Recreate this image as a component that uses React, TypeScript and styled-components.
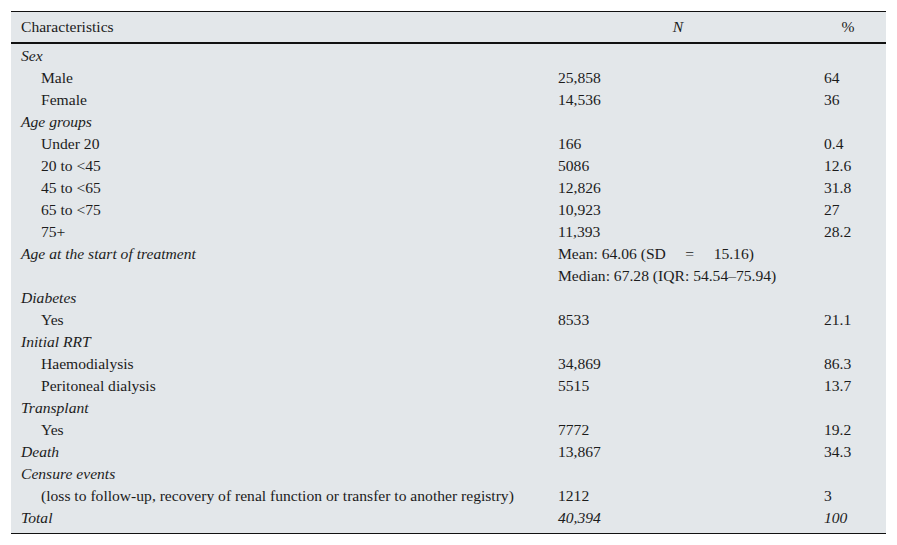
import React from "react"
import styled, { createGlobalStyle } from "styled-components"

const Global = createGlobalStyle`
  body {
    margin: 0;
    background: #ffffff;
    font-family: "Liberation Serif", "Times New Roman", serif;
  }
`

const Wrap = styled.div`
  padding: 11px 11px 0 11px;
`

const Table = styled.table`
  width: 875px;
  border-collapse: collapse;
  background: #e3e7ea;
  color: #1c1c1c;
  font-size: 15.6px;
  border-top: 1px solid #111;
  border-bottom: 1px solid #111;
`

const HeadCell = styled.th<{ $align?: string; $italic?: boolean; $pr?: number }>`
  height: 30px;
  padding: 0 ${p => p.$pr ?? 0}px 0 ${p => (p.$align === "center" ? 0 : 10)}px;
  font-weight: normal;
  text-align: ${p => p.$align || "left"};
  font-style: ${p => (p.$italic ? "italic" : "normal")};
  border-bottom: 2px solid #111;
`

const Cell = styled.td<{ $indent?: boolean; $italic?: boolean }>`
  height: 22px;
  padding: 0 0 0 ${p => (p.$indent ? "30px" : "10px")};
  font-style: ${p => (p.$italic ? "italic" : "normal")};
  white-space: pre;
  line-height: 22px;
`

const FirstRow = styled.tr`
  td {
    padding-top: 1px;
  }
`

const LastRow = styled.tr`
  td {
    padding-bottom: 4px;
  }
`

type Row = { label: string; n?: string; pct?: string; kind: "group" | "item" | "blank" }

const rows: Row[] = [
  { label: "Sex", kind: "group" },
  { label: "Male", n: "25,858", pct: "64", kind: "item" },
  { label: "Female", n: "14,536", pct: "36", kind: "item" },
  { label: "Age groups", kind: "group" },
  { label: "Under 20", n: "166", pct: "0.4", kind: "item" },
  { label: "20 to <45", n: "5086", pct: "12.6", kind: "item" },
  { label: "45 to <65", n: "12,826", pct: "31.8", kind: "item" },
  { label: "65 to <75", n: "10,923", pct: "27", kind: "item" },
  { label: "75+", n: "11,393", pct: "28.2", kind: "item" },
  { label: "Age at the start of treatment", n: "Mean: 64.06 (SD\u2003 =\u2003 15.16)", kind: "group" },
  { label: "", n: "Median: 67.28 (IQR: 54.54\u201375.94)", kind: "blank" },
  { label: "Diabetes", kind: "group" },
  { label: "Yes", n: "8533", pct: "21.1", kind: "item" },
  { label: "Initial RRT", kind: "group" },
  { label: "Haemodialysis", n: "34,869", pct: "86.3", kind: "item" },
  { label: "Peritoneal dialysis", n: "5515", pct: "13.7", kind: "item" },
  { label: "Transplant", kind: "group" },
  { label: "Yes", n: "7772", pct: "19.2", kind: "item" },
  { label: "Death", n: "13,867", pct: "34.3", kind: "group" },
  { label: "Censure events", kind: "group" },
  {
    label: "(loss to follow-up, recovery of renal function or transfer to another registry)",
    n: "1212",
    pct: "3",
    kind: "item",
  },
]

const cells = (r: Row) => (
  <>
    <Cell $italic={r.kind === "group"} $indent={r.kind === "item"}>
      {r.label}
    </Cell>
    <Cell>{r.n}</Cell>
    <Cell>{r.pct}</Cell>
  </>
)

const App = () => {
  return (
    <Wrap>
      <Global />
      <Table>
        <colgroup>
          <col style={{ width: 537 }} />
          <col style={{ width: 266 }} />
          <col style={{ width: 72 }} />
        </colgroup>
        <thead>
          <tr>
            <HeadCell>Characteristics</HeadCell>
            <HeadCell $align="center" $italic $pr={6}>
              N
            </HeadCell>
            <HeadCell $align="center" $pr={4}>
              %
            </HeadCell>
          </tr>
        </thead>
        <tbody>
          {rows.map((r, i) =>
            i === 0 ? <FirstRow key={i}>{cells(r)}</FirstRow> : <tr key={i}>{cells(r)}</tr>
          )}
          <LastRow>
            <Cell $italic>Total</Cell>
            <Cell $italic>40,394</Cell>
            <Cell $italic>100</Cell>
          </LastRow>
        </tbody>
      </Table>
    </Wrap>
  )
}

export default App
